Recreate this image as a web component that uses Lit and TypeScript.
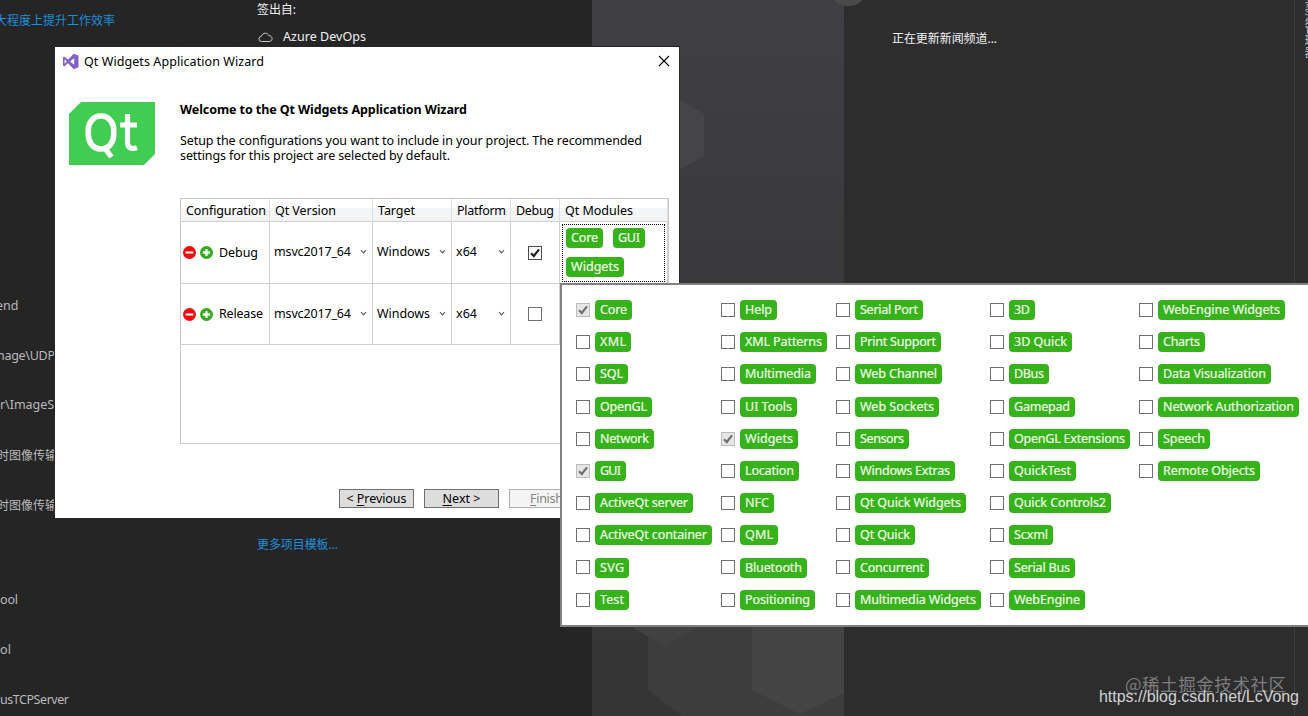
import { LitElement, html, css, svg, nothing } from "lit";
import { customElement, property } from "lit/decorators.js";

/** One line of text tracked to occupy exactly `w` pixels. */
@customElement("fit-text")
class FitText extends LitElement {
  @property() text = "";
  @property({ type: Number }) w = 0;
  @property({ type: Number }) key = -1;
  static styles = css`
    :host { display: block; white-space: pre; flex: none; }
    .u { text-decoration: underline; text-underline-offset: 2px; }
  `;
  updated() {
    const el = this.renderRoot.querySelector("span") as HTMLElement;
    el.style.letterSpacing = "0px";
    const n = el.getBoundingClientRect().width;
    const len = Array.from(this.text).length;
    if (this.w > 0 && len > 1) el.style.letterSpacing = `${(this.w - n) / (len - 1)}px`;
    this.style.width = `${this.w || n}px`;
  }
  render() {
    const k = this.key;
    return k < 0
      ? html`<span>${this.text}</span>`
      : html`<span>${this.text.slice(0, k)}<span class="u">${this.text[k]}</span>${this.text.slice(k + 1)}</span>`;
  }
}

const fit = (text: string, w: number, cls = "", key = -1) =>
  html`<fit-text class=${cls} .text=${text} .w=${w} .key=${key}></fit-text>`;

@customElement("check-box")
class CheckBox extends LitElement {
  @property({ type: Boolean }) checked = false;
  @property({ type: Boolean }) locked = false;
  static styles = css`
    :host { display: block; width: 14px; height: 14px; flex: none; }
    svg { display: block; }
  `;
  render() {
    const c = this.locked ? "#707070" : "#212121";
    return html`<svg width="14" height="14" viewBox="0 0 14 14">
      <rect x=".5" y=".5" width="13" height="13" fill=${this.locked ? "#e6e6e6" : "#fff"}
        stroke=${this.locked ? "#bcbcbc" : this.checked ? "#4a4a4a" : "#707070"} />
      ${this.checked ? svg`<path d="M3 7.200 5.800 10 11 3.400" fill="none" stroke=${c} stroke-width="2.200" />` : nothing}
    </svg>`;
  }
}

type Mod = [string, number, boolean?];
const MODULES: Mod[][] = [
  [["Core", 37, true], ["XML", 36], ["SQL", 33], ["OpenGL", 57], ["Network", 59], ["GUI", 31, true],
    ["ActiveQt server", 98], ["ActiveQt container", 117], ["SVG", 34], ["Test", 34]],
  [["Help", 37], ["XML Patterns", 87], ["Multimedia", 76], ["UI Tools", 57], ["Widgets", 58, true], ["Location", 59],
    ["NFC", 34], ["QML", 38], ["Bluetooth", 67], ["Positioning", 75]],
  [["Serial Port", 68], ["Print Support", 86], ["Web Channel", 87], ["Web Sockets", 84], ["Sensors", 54],
    ["Windows Extras", 100], ["Qt Quick Widgets", 111], ["Qt Quick", 60], ["Concurrent", 74], ["Multimedia Widgets", 126]],
  [["3D", 26], ["3D Quick", 63], ["DBus", 40], ["Gamepad", 66], ["OpenGL Extensions", 121], ["QuickTest", 67],
    ["Quick Controls2", 102], ["Scxml", 44], ["Serial Bus", 66], ["WebEngine", 76]],
  [["WebEngine Widgets", 127], ["Charts", 47], ["Data Visualization", 113], ["Network Authorization", 141],
    ["Speech", 52], ["Remote Objects", 102]],
];

const tag = (name: string, w: number) => html`<div class="tag">${fit(name, w - 10)}</div>`;

const chevron = html`<svg class="chev" width="7" height="6" viewBox="0 0 7 6">
  <path d="M1 1.200 3.500 3.900 6 1.200" fill="none" stroke="#606060" stroke-width="1.200" /></svg>`;

const minus = html`<svg width="13" height="13" viewBox="0 0 13 13">
  <circle cx="6.500" cy="6.500" r="6.500" fill="#f00a0a" /><path d="M2.600 6.500h7.800" stroke="#fff" stroke-width="2" /></svg>`;
const plus = html`<svg width="13" height="13" viewBox="0 0 13 13">
  <circle cx="6.500" cy="6.500" r="6.500" fill="#35ac1f" /><path d="M2.900 6.500h7.200M6.500 2.900v7.200" stroke="#fff" stroke-width="2.300" /></svg>`;

@customElement("app-root")
class AppRoot extends LitElement {
  static styles = css`
    :host {
      display: block; position: relative; width: 1308px; height: 716px; overflow: hidden;
      background: #252526; color: #000;
      font: 12.5px/16px "Noto Sans", "Open Sans", "Noto Sans CJK SC", sans-serif;
    }
    * { box-sizing: border-box; }
    svg { display: block; flex: none; }
    .start { display: grid; grid-template-columns: 257px 335px 252px 450px 14px; height: 716px; }
    .recent { overflow: hidden; color: #b9b9b9; }
    .link { color: #1c8fdb; font-size: 12px; }
    .promo { margin: 13px 0 0 -5px; }
    .files { padding-top: 252px; }
    .file { height: 49.8px; display: flex; align-items: center; }
    .gap { height: 45.4px; }
    .s1 { margin-left: -7px; }
    .s2 { margin-left: -4px; }
    .cj { margin: 2px 0 0 -3px; font-size: 12px; }
    .get { color: #f1f1f1; }
    .signout { margin-top: 2px; font-size: 12px; }
    .azure { display: flex; align-items: center; gap: 10px; margin-top: 11px; padding-left: 1px; }
    .more { margin-top: 492px; }
    .news { background: #2d2d2e; color: #f1f1f1; padding: 31px 0 0 48px; font-size: 12px; }
    .side { border-left: 1px solid #3f3f41; background: #2d2d2e; overflow: hidden; padding-left: 8px; }
    .vert { writing-mode: vertical-rl; text-orientation: upright; height: 60px; width: 12px; margin-top: -2px; font-size: 12px; line-height: 12px; color: #b8bcc4; white-space: nowrap; }

    .dialog { position: absolute; left: 55px; top: 47px; width: 624px; height: 471px; background: #fff; box-shadow: 0 0 0 1px #262627; }
    .bar { display: flex; align-items: center; height: 29px; padding: 0 9px 0 7px; gap: 5px; }
    .bar .x { margin: -2px 0 0 auto; }
    .body { display: flex; padding: 26px 10px 0 14px; gap: 25px; }
    .qt { width: 86px; height: 63px; }
    .main { width: 489px; }
    .h { font-weight: 700; font-size: 12.5px; }
    .p { margin-top: 15px; line-height: 15px; }
    .grid { margin-top: 35px; height: 246px; border: 1px solid #c9c9cb; display: grid;
      grid-template-columns: 89px 103px 79px 59px 49px 108px; grid-template-rows: 23px 62px 61px; }
    .th { padding: 4px 0 0 5px; border-bottom: 1px solid #d0d0d2; border-right: 1px solid #dedfe1;
      background: linear-gradient(#fff 0, #fff 40%, #f5f6f7 41%, #f2f3f5 100%); }
    .td { border-right: 1px solid #d0d0d2; border-bottom: 1px solid #d0d0d2; display: flex; align-items: center; }
    .cfg { padding-left: 2px; gap: 4px; }
    .cfg fit-text { margin-left: 2px; }
    .sel { padding: 0 5px 1px 4px; justify-content: space-between; }
    .mid { justify-content: center; padding-right: 1px; }
    .mods { padding: 2px 0 0 2px; align-items: flex-start; }
    .focus { width: 103px; height: 58px; border: 1px dotted #000; padding: 3px; display: flex; flex-wrap: wrap;
      gap: 9px 10px; align-content: flex-start; }
    .foot { display: flex; gap: 10px; position: absolute; left: 284px; top: 442px; }
    .btn { width: 75px; height: 19px; border: 1px solid #707070; background: #ddd; display: flex; justify-content: center; align-items: center; }
    .off { background: #f4f4f4; border-color: #adb2b5; color: #838383; }

    .tag { height: 20px; border-radius: 4px; background: #36b21a; color: #f2fbe9; padding: 0 5px; line-height: 20px; flex: none; -webkit-text-stroke: .2px #f2fbe9; }
    .popup { position: absolute; left: 560px; top: 283px; width: 760px; height: 344px; background: #fff;
      border: 2px solid #808080; padding: 9px 0 0 14px; display: grid; grid-template-columns: 145px 115px 154px 149px 170px; }
    .opt { display: flex; align-items: center; gap: 5px; height: 32.2px; }
    .opt check-box { margin-top: -.3px; }
    .mark { position: absolute; white-space: nowrap; }
    .knob { left: 834px; top: 0; }
    .juejin { left: 1125px; top: 672px; font: 17.5px/24px "Noto Sans CJK SC", sans-serif; color: #7c7c7d; }
    .csdn { left: 1099px; top: 687px; font: 16px/20px "Liberation Sans", sans-serif; color: #d2d2d2; }
  `;

  row(name: string, w: number, on: boolean) {
    return html`
      <div class="td cfg">${minus}${plus}${fit(name, w)}</div>
      <div class="td sel">${fit("msvc2017_64", 77)}${chevron}</div>
      <div class="td sel">${fit("Windows", 53)}${chevron}</div>
      <div class="td sel">${fit("x64", 21)}${chevron}</div>
      <div class="td mid"><check-box .checked=${on}></check-box></div>
      <div class="td mods">${on
        ? html`<div class="focus">${tag("Core", 37)}${tag("GUI", 32)}${tag("Widgets", 58)}</div>` : nothing}</div>`;
  }

  render() {
    return html`
      <div class="start">
        <div class="recent">
          ${fit("大程度上提升工作效率", 120, "link promo")}
          <div class="files">
            <div class="file">${fit("end", 0, "s2")}</div>
            <div class="file">${fit("mage\\UDP", 62, "s1")}</div>
            <div class="file">${fit("r\\ImageSe", 61)}</div>
            <div class="file">${fit("时图像传输", 60, "cj")}</div>
            <div class="file">${fit("时图像传输", 60, "cj")}</div>
            <div class="gap"></div>
            <div class="file">${fit("ool", 18)}</div>
            <div class="file">${fit("ol", 11)}</div>
            <div class="file">${fit("usTCPServer", 69)}</div>
          </div>
        </div>
        <div class="get">
          ${fit("签出自:", 39, "signout")}
          <div class="azure">
            <svg width="15" height="11" viewBox="0 0 15 11"><path d="M3.600 9.500a2.600 2.600 0 0 1-.2-5.200C4 2.300 5.500 1.200 7.300 1.200c1.700 0 3 .9 3.500 2.400 2 0 3.300 1.300 3.300 3s-1.300 2.900-3 2.900z" fill="none" stroke="#c8c8c8" /></svg>
            ${fit("Azure DevOps", 83)}
          </div>
          ${fit("更多项目模板...", 81, "link more")}
        </div>
        <div class="art">
          <svg width="252" height="716" viewBox="0 0 252 716">
            <defs><linearGradient id="g" x1="0" y1="0" x2="0" y2="1">
              <stop offset="0" stop-color="#403f44" /><stop offset=".4" stop-color="#39393c" />
              <stop offset="1" stop-color="#353536" /></linearGradient></defs>
            <rect width="252" height="716" fill="url(#g)" />
            <path d="M50 118 87 99l25 15v42l-25 14-37-14z" fill="#454547" />
            <path d="M56 600h196v116H90L56 690z" fill="#3d3d3e" />
            <path d="M40 627h66l-34 19z" fill="#414142" />
            <path d="M160 600h92v93l-44 21-48-24z" fill="#444445" />
          </svg>
        </div>
        <div class="news">${fit("正在更新新闻频道...", 105)}</div>
        <div class="side"><div class="vert">资源管理器</div></div>
      </div>
      <svg class="mark knob" width="28" height="7" viewBox="0 0 28 7"><path d="M0 0h28q-4 6-14 6.200Q4 6 0 0z" fill="#4a4a4b" /></svg>

      <div class="dialog">
        <div class="bar">
          <svg width="17" height="17" viewBox="0 0 17 17">
            <path d="M1 4.300 2.500 3.700 6 6.700 11.700.8 16.500 2.800v11.400l-4.800 2L6 10.300 2.500 13.300 1 12.700zM2.600 6.200v4.600L4.800 8.500zM12.200 5.200 8 8.500l4.200 3.300z" fill="#865fc5" fill-rule="evenodd" />
          </svg>
          ${fit("Qt Widgets Application Wizard", 180)}
          <svg class="x" width="12" height="12" viewBox="0 0 12 12"><path d="M1 1l10 10M11 1 1 11" stroke="#000" stroke-width="1.100" /></svg>
        </div>
        <div class="body">
          <svg class="qt" viewBox="0 0 86 63">
            <path d="M12 0H86V52L75 63H0V12z" fill="#41cd52" />
            <rect x="19.300" y="14" width="25.400" height="33" rx="12" ry="14" fill="none" stroke="#fff" stroke-width="5.600" />
            <path d="M35 45 42.500 55" stroke="#fff" stroke-width="5.400" />
            <path d="M58.500 12v28q0 6.500 5.500 6.500 2 0 4-.8M51 23H68" fill="none" stroke="#fff" stroke-width="5.200" />
          </svg>
          <div class="main">
            ${fit("Welcome to the Qt Widgets Application Wizard", 287, "h")}
            <div class="p">
              ${fit("Setup the configurations you want to include in your project. The recommended", 462)}
              ${fit("settings for this project are selected by default.", 270)}
            </div>
            <div class="grid">
              <div class="th">${fit("Configuration", 80)}</div>
              <div class="th">${fit("Qt Version", 61)}</div>
              <div class="th">${fit("Target", 37)}</div>
              <div class="th">${fit("Platform", 49)}</div>
              <div class="th">${fit("Debug", 38)}</div>
              <div class="th">${fit("Qt Modules", 68)}</div>
              ${this.row("Debug", 39, true)}${this.row("Release", 44, false)}
            </div>
          </div>
        </div>
        <div class="foot">
          <div class="btn">${fit("< Previous", 60, "", 2)}</div>
          <div class="btn">${fit("Next >", 38, "", 0)}</div>
          <div class="btn off">${fit("Finish", 33, "", 0)}</div>
        </div>
      </div>

      <div class="popup">
        ${MODULES.map((col) => html`<div>${col.map(([n, w, on]) => html`
          <div class="opt"><check-box .checked=${!!on} .locked=${!!on}></check-box>${tag(n, w)}</div>`)}</div>`)}
      </div>
      ${fit("@稀土掘金技术社区", 161, "mark juejin")}
      ${fit("https://blog.csdn.net/LcVong", 200, "mark csdn")}
    `;
  }
}
